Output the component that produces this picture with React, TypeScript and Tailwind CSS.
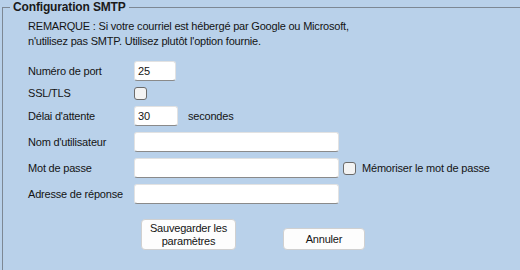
import React from "react";

const font = "font-['Liberation_Sans',Arial,sans-serif] text-[11px] tracking-[-0.2px] text-[#141414]";

function TextBox({ value = "", className = "" }: { value?: string; className?: string }) {
	return (
		<div
			className={`h-[20px] bg-white border border-[#e2e2e2] border-b-[#8a8a8a] rounded-[3px] flex items-center pl-[3px] ${className}`}
		>
			{value}
		</div>
	);
}

function CheckBox() {
	return (
		<span className="w-[13px] h-[13px] rounded-[3px] border border-[#6b6b6b] bg-[#f3f3f3] inline-block shrink-0" />
	);
}

function Row({
	label,
	top,
	children,
}: {
	label: string;
	top: string;
	children: React.ReactNode;
}) {
	return (
		<div className={`flex items-center h-[20px] ${top}`}>
			<span className="w-[106px] shrink-0">{label}</span>
			{children}
		</div>
	);
}

export default function App() {
	return (
		<div className={`w-[520px] h-[270px] bg-[#b9d1ea] overflow-hidden ${font}`}>
			<fieldset className="ml-[2px] w-[600px] h-[320px] border-t border-l border-[#7d8894]">
				<legend className="ml-[7px] px-[3px] h-[14px] leading-[14px] text-[12px] font-bold tracking-[-0.15px] text-[#1a1a1a]">
					Configuration SMTP
				</legend>

				<div className="pl-[25px] pt-[5px]">
					<p className="leading-[15px]">
						REMARQUE : Si votre courriel est hébergé par Google ou Microsoft,
						<br />
						n'utilisez pas SMTP. Utilisez plutôt l'option fournie.
					</p>

					<Row label="Numéro de port" top="mt-[12px]">
						<TextBox value="25" className="w-[42px]" />
					</Row>

					<Row label="SSL/TLS" top="mt-[2px]">
						<CheckBox />
					</Row>

					<Row label="Délai d'attente" top="mt-[3px]">
						<TextBox value="30" className="w-[44px]" />
						<span className="ml-[10px]">secondes</span>
					</Row>

					<Row label="Nom d'utilisateur" top="mt-[6px]">
						<TextBox className="w-[205px]" />
					</Row>

					<Row label="Mot de passe" top="mt-[6px]">
						<TextBox className="w-[205px]" />
						<span className="ml-[4px] flex items-center gap-[6px]">
							<CheckBox />
							<span>Mémoriser le mot de passe</span>
						</span>
					</Row>

					<Row label="Adresse de réponse" top="mt-[6px]">
						<TextBox className="w-[205px]" />
					</Row>

					<div className="flex items-end mt-[15px] pl-[113px] gap-[47px]">
						<button
							type="button"
							className="w-[95px] h-[31px] bg-[#fdfdfd] border border-[#d0d0d0] rounded-[4px] leading-[13px] text-center"
						>
							Sauvegarder les
							<br />
							paramètres
						</button>
						<button
							type="button"
							className="w-[82px] h-[22px] bg-[#fdfdfd] border border-[#d0d0d0] rounded-[4px] text-center"
						>
							Annuler
						</button>
					</div>
				</div>
			</fieldset>
		</div>
	);
}
